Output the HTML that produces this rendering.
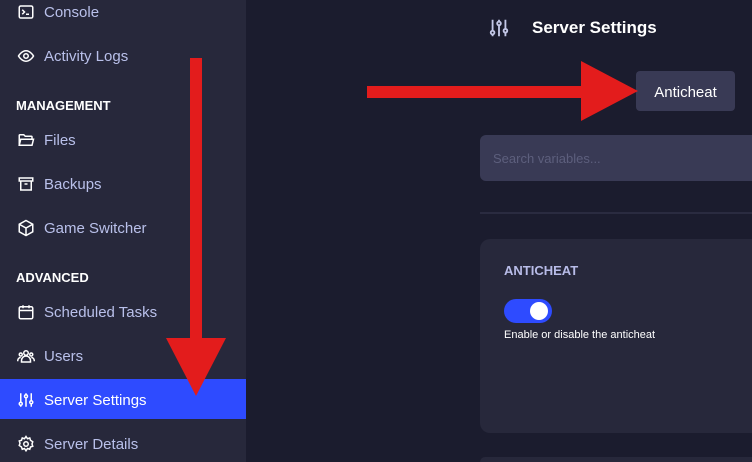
<!DOCTYPE html>
<html><head><meta charset="utf-8"><style>
*{margin:0;padding:0;box-sizing:border-box}
html{width:752px;height:462px;overflow:hidden}
body{width:752px;height:462px;overflow:hidden;background:#1b1c2e;font-family:"Liberation Sans",sans-serif;position:relative}
.sb{position:absolute;left:0;top:0;width:246px;height:462px;background:#27283b}
.it{position:absolute;left:0;width:246px;height:40px;display:flex;align-items:center;padding-left:17px;padding-top:2px;color:#b9c0ea;font-size:15px}
.it svg{width:18px;height:18px;margin-right:9px;flex:none}
.it.act{background:#2e4bff;color:#fff}
.hd{position:absolute;left:16px;color:#fff;font-weight:bold;font-size:13px}
.abs{position:absolute}
</style></head><body>
<div class="sb">
<div class="it" style="top:-9px"><svg viewBox="0 0 24 24" fill="none" stroke="#fff" stroke-width="2"><rect x="3" y="4" width="18" height="16" rx="2"/><path d="M7 9l3 3-3 3M12 15h4"/></svg>Console</div>
<div class="it" style="top:35px"><svg viewBox="0 0 24 24" fill="none" stroke="#fff" stroke-width="2"><path d="M2 12s4-7 10-7 10 7 10 7-4 7-10 7S2 12 2 12z"/><circle cx="12" cy="12" r="3"/></svg>Activity Logs</div>
<div class="hd" style="top:98px">MANAGEMENT</div>
<div class="it" style="top:119px"><svg viewBox="0 0 24 24" fill="none" stroke="#fff" stroke-width="2"><path d="M3 19V6a1 1 0 011-1h5l2 2h8a1 1 0 011 1v2M3 19l2-8h17l-2 8z"/></svg>Files</div>
<div class="it" style="top:163px"><svg viewBox="0 0 24 24" fill="none" stroke="#fff" stroke-width="2"><rect x="3" y="4" width="18" height="4"/><path d="M5 8v12h14V8M10 12h4"/></svg>Backups</div>
<div class="it" style="top:207px"><svg viewBox="0 0 24 24" fill="none" stroke="#fff" stroke-width="2"><path d="M12 2l9 5v10l-9 5-9-5V7zM3 7l9 5 9-5M12 12v10"/></svg>Game Switcher</div>
<div class="hd" style="top:270px">ADVANCED</div>
<div class="it" style="top:291px"><svg viewBox="0 0 24 24" fill="none" stroke="#fff" stroke-width="2"><rect x="3" y="5" width="18" height="16" rx="2"/><path d="M3 10h18M8 3v4M16 3v4"/></svg>Scheduled Tasks</div>
<div class="it" style="top:335px"><svg viewBox="0 0 24 24" fill="none" stroke="#fff" stroke-width="2"><circle cx="12" cy="8" r="3"/><circle cx="5" cy="10" r="2"/><circle cx="19" cy="10" r="2"/><path d="M6 20v-2a6 6 0 0112 0v2zM1 19v-1a4 4 0 014-4M23 19v-1a4 4 0 00-4-4"/></svg>Users</div>
<div class="it act" style="top:379px"><svg viewBox="0 0 24 24" fill="none" stroke="#fff" stroke-width="2"><path d="M5 3v12M5 19v2M12 3v2M12 9v12M19 3v10M19 17v4"/><circle cx="5" cy="17" r="2"/><circle cx="12" cy="7" r="2"/><circle cx="19" cy="15" r="2"/></svg>Server Settings</div>
<div class="it" style="top:423px"><svg viewBox="0 0 24 24" fill="none" stroke="#fff" stroke-width="2"><circle cx="12" cy="12" r="3"/><path d="M12 2l2 3 3-1 1 3 3 2-1 3 1 3-3 1-1 3-3-1-2 3-2-3-3 1-1-3-3-2 1-3-1-3 3-1 1-3 3 1z"/></svg>Server Details</div>
</div>
<svg class="abs" style="left:488px;top:17px" width="22" height="22" viewBox="0 0 24 24" fill="none" stroke="#c4c8e8" stroke-width="2"><path d="M5 3v12M5 19v2M12 3v2M12 9v12M19 3v10M19 17v4"/><circle cx="5" cy="17" r="2"/><circle cx="12" cy="7" r="2"/><circle cx="19" cy="15" r="2"/></svg>
<div class="abs" style="left:532px;top:18px;color:#fff;font-weight:bold;font-size:17px">Server Settings</div>
<div class="abs" style="left:636px;top:71px;width:99px;height:40px;background:#393a55;border-radius:4px;color:#fff;font-size:15px;display:flex;align-items:center;justify-content:center;padding-top:2px">Anticheat</div>
<div class="abs" style="left:480px;top:135px;width:280px;height:46px;background:#393a55;border-radius:6px;color:#5d5f7d;font-size:13px;padding:16px 0 0 13px">Search variables...</div>
<div class="abs" style="left:480px;top:212px;width:280px;height:2px;background:#2a2b40"></div>
<div class="abs" style="left:480px;top:239px;width:290px;height:194px;background:#27283b;border-radius:10px"></div>
<div class="abs" style="left:504px;top:263px;color:#b8bce8;font-weight:bold;font-size:13px">ANTICHEAT</div>
<div class="abs" style="left:504px;top:299px;width:48px;height:24px;background:#2e4bff;border-radius:12px"><div style="position:absolute;left:26px;top:3px;width:18px;height:18px;border-radius:50%;background:#fff"></div></div>
<div class="abs" style="left:504px;top:329px;color:#fff;font-size:11px">Enable or disable the anticheat</div>
<div class="abs" style="left:480px;top:457px;width:290px;height:5px;background:#27283b;border-radius:10px 10px 0 0"></div>
<svg class="abs" style="left:0;top:0" width="752" height="462"><g fill="#e31c1c"><rect x="190" y="58" width="12" height="282"/><polygon points="166,338 226,338 196,396"/><rect x="367" y="86" width="216" height="12"/><polygon points="581,61 581,121 638,91"/></g></svg>
</body></html>
